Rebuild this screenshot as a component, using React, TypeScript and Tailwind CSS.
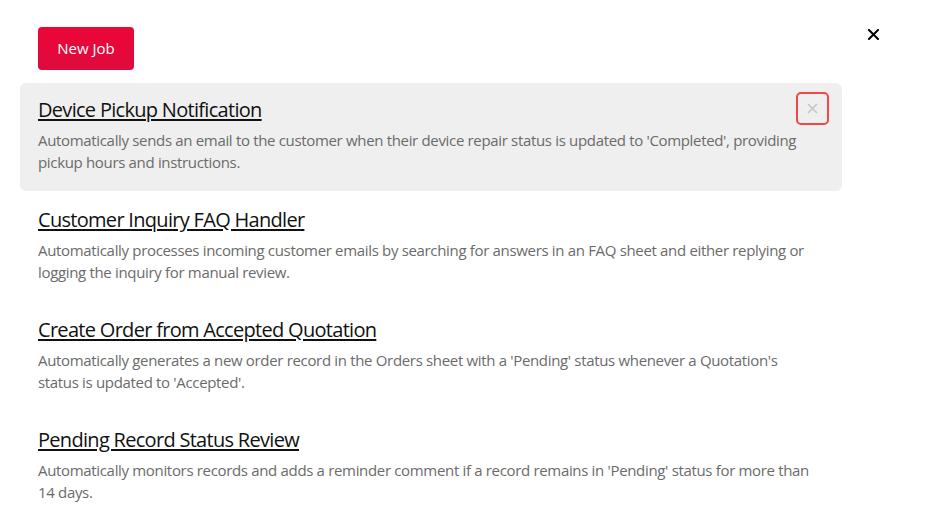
import React from "react";

const items = [
  {
    title: "Device Pickup Notification",
    desc: "Automatically sends an email to the customer when their device repair status is updated to 'Completed', providing pickup hours and instructions.",
    active: true,
  },
  {
    title: "Customer Inquiry FAQ Handler",
    desc: "Automatically processes incoming customer emails by searching for answers in an FAQ sheet and either replying or logging the inquiry for manual review.",
  },
  {
    title: "Create Order from Accepted Quotation",
    desc: "Automatically generates a new order record in the Orders sheet with a 'Pending' status whenever a Quotation's status is updated to 'Accepted'.",
  },
  {
    title: "Pending Record Status Review",
    desc: "Automatically monitors records and adds a reminder comment if a record remains in 'Pending' status for more than 14 days.",
  },
];

export default function App() {
  return (
    <div
      className="w-[952px] h-[529px] bg-white relative overflow-hidden"
      style={{ fontFamily: '"Open Sans", "Noto Sans", sans-serif' }}
    >
      <button className="absolute left-[866px] top-[27px] w-[14px] h-[14px] flex items-center justify-center">
        <svg width="11" height="11" viewBox="0 0 11 11">
          <path d="M1 1 L10 10 M10 1 L1 10" stroke="#000" strokeWidth="2" strokeLinecap="square" />
        </svg>
      </button>
      <div className="pl-[20px] pt-[27px] w-[842px]">
        <div className="pl-[18px]">
          <button className="w-[96px] h-[43px] rounded-[4px] bg-gradient-to-b from-[#ec0638] to-[#e00a3c] text-white text-[15px] font-medium">
            New Job
          </button>
        </div>
        <div className="mt-[13px] flex flex-col gap-[2px]">
          {items.map((it, i) => (
            <div
              key={i}
              className={`relative rounded-[6px] pl-[18px] pr-[22px] pt-[13px] pb-[18px] ${it.active ? "bg-[#efefef]" : ""}`}
            >
              <div className="text-[20px] leading-[28px] tracking-[-0.7px] text-[#111] underline underline-offset-[2px] decoration-[1.5px]">
                <span>{it.title}</span>
              </div>
              <p className="mt-[5px] text-[15px] leading-[22px] tracking-[-0.33px] text-[#6b6b6b]">{it.desc}</p>
              {it.active && (
                <button className="absolute left-[776px] top-[9px] w-[33px] h-[33px] rounded-[5px] border-2 border-[#f04848] flex items-center justify-center">
                  <svg width="11" height="11" viewBox="0 0 11 11">
                    <path d="M1 1 L10 10 M10 1 L1 10" stroke="#c4c4c4" strokeWidth="1.6" />
                  </svg>
                </button>
              )}
            </div>
          ))}
        </div>
      </div>
    </div>
  );
}
